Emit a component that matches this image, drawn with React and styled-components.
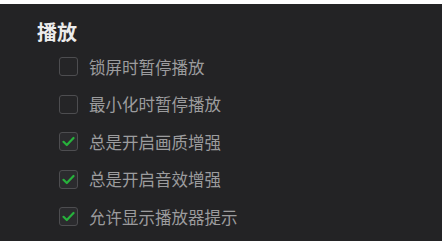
import React from "react";
import styled, { createGlobalStyle } from "styled-components";

const Global = createGlobalStyle`
  html, body { margin: 0; padding: 0; background: #ffffff; }
  body { font-family: "Noto Sans CJK SC", "Noto Sans", sans-serif; }
`;

const Page = styled.div`
  padding-top: 4px;
  background: #ffffff;
  width: 442px;
  height: 241px;
  box-sizing: border-box;
`;

const Panel = styled.div`
  background: #232325;
  height: 237px;
  padding: 16px 0 0 37px;
  box-sizing: border-box;
`;

const Title = styled.div`
  color: #ececec;
  font-size: 20px;
  font-weight: 700;
  line-height: 24px;
  margin-bottom: 4px;
`;

const List = styled.div`
  display: flex;
  flex-direction: column;
  padding-left: 22px;
`;

const Row = styled.label`
  display: flex;
  align-items: center;
  gap: 11px;
  height: 37.5px;
`;

const Box = styled.span`
  width: 19px;
  height: 19px;
  box-sizing: border-box;
  border: 1.5px solid #4d4d50;
  border-radius: 3px;
  background: ${(p) => (p.$checked ? "#2b2b2e" : "#252527")};
  display: flex;
  align-items: center;
  justify-content: center;
`;

const Label = styled.span`
  color: #9c9c9e;
  font-size: 16.5px;
  line-height: 20px;
`;

const Check = () => (
  <svg width="13" height="11" viewBox="0 0 13 11">
    <path d="M1.5 5.8 L4.8 9 L11.5 2" fill="none" stroke="#27b23c" strokeWidth="2.2" strokeLinecap="round" strokeLinejoin="round" />
  </svg>
);

const items = [
  { text: "锁屏时暂停播放", checked: false },
  { text: "最小化时暂停播放", checked: false },
  { text: "总是开启画质增强", checked: true },
  { text: "总是开启音效增强", checked: true },
  { text: "允许显示播放器提示", checked: true },
];

export default function App() {
  return (
    <>
      <Global />
      <Page>
        <Panel>
          <Title>播放</Title>
          <List>
            {items.map((it) => (
              <Row key={it.text}>
                <Box $checked={it.checked}>{it.checked && <Check />}</Box>
                <Label>{it.text}</Label>
              </Row>
            ))}
          </List>
        </Panel>
      </Page>
    </>
  );
}
